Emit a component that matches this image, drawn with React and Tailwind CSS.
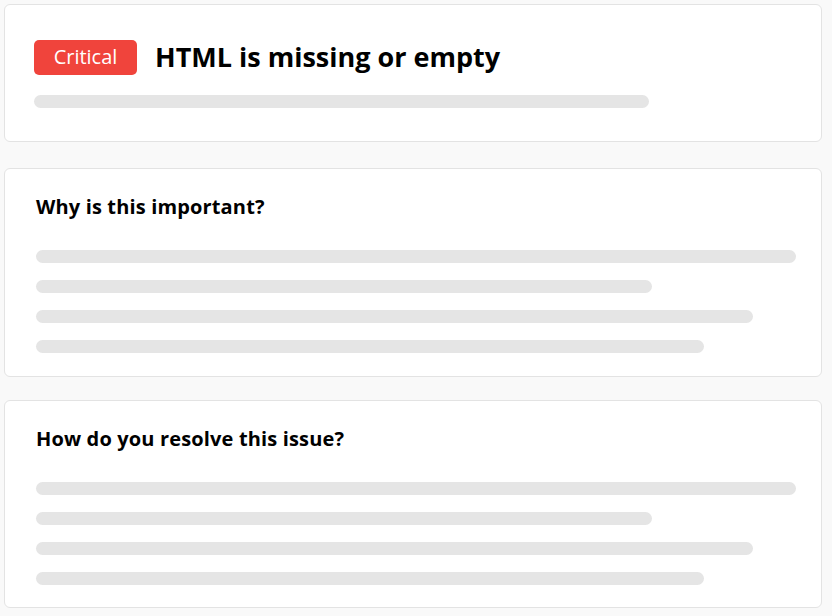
import React from 'react';

const font = { fontFamily: '"Open Sans", "Noto Sans", sans-serif' };

const Bar = ({ w }) => <div className={`h-[13px] rounded-full bg-[#e5e5e5] ${w}`} />;

const Section = ({ title, h }) => (
    <div className={`bg-white border border-[#e3e3e3] rounded-[6px] pl-[31px] pt-[24px] ${h}`}>
        <h2 className="text-[20px] leading-[28px] font-bold text-black tracking-[0.15px]">{title}</h2>
        <div className="mt-[29px] flex flex-col gap-[17px]">
            <Bar w="w-[760px]" />
            <Bar w="w-[616px]" />
            <Bar w="w-[717px]" />
            <Bar w="w-[668px]" />
        </div>
    </div>
);

export default function App() {
    return (
        <div className="min-h-[616px] bg-[#f9f9f9] p-[4px] pr-[10px] flex flex-col" style={font}>
            <div className="bg-white border border-[#e3e3e3] rounded-[6px] h-[138px] pl-[29px] pt-[32px]">
                <div className="flex items-center gap-[18px]">
                    <span className="w-[103px] h-[35px] rounded-[5px] bg-[#f0443c] text-white text-[20px] flex items-center justify-center">
                        Critical
                    </span>
                    <h1 className="text-[27px] font-bold text-black">HTML is missing or empty</h1>
                </div>
                <div className="mt-[17px]">
                    <Bar w="w-[615px]" />
                </div>
            </div>
            <div className="mt-[26px]">
                <Section title="Why is this important?" h="h-[209px]" />
            </div>
            <div className="mt-[23px]">
                <Section title="How do you resolve this issue?" h="h-[208px]" />
            </div>
        </div>
    );
}
